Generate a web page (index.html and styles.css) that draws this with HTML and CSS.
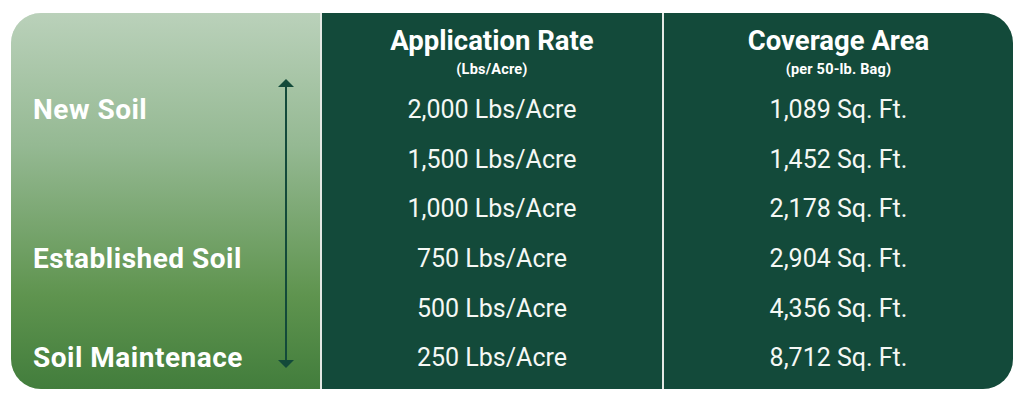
FILE: index.html
```html
<!DOCTYPE html>
<html lang="en">
<head>
<meta charset="utf-8">
<title>Application Rate Table</title>
<link rel="stylesheet" href="styles.css">
</head>
<body>
<div class="card">
  <div class="col col-stage">
    <div class="stage-head"></div>
    <div class="stage-label r1">New Soil</div>
    <div class="stage-label r4">Established Soil</div>
    <div class="stage-label r6">Soil Maintenace</div>
    <svg class="arrow" viewBox="0 0 16 289" width="16" height="289" aria-hidden="true">
      <line x1="8" y1="7" x2="8" y2="282" stroke="#134a3a" stroke-width="2"/>
      <polygon points="8,0 16,8 0,8" fill="#134a3a"/>
      <polygon points="8,289 16,281 0,281" fill="#134a3a"/>
    </svg>
  </div>
  <div class="col col-data">
    <div class="head">
      <div class="title">Application Rate</div>
      <div class="sub">(Lbs/Acre)</div>
    </div>
    <div class="cell">2,000 Lbs/Acre</div>
    <div class="cell">1,500 Lbs/Acre</div>
    <div class="cell">1,000 Lbs/Acre</div>
    <div class="cell">750 Lbs/Acre</div>
    <div class="cell">500 Lbs/Acre</div>
    <div class="cell">250 Lbs/Acre</div>
  </div>
  <div class="col col-data">
    <div class="head">
      <div class="title">Coverage Area</div>
      <div class="sub">(per 50-lb. Bag)</div>
    </div>
    <div class="cell">1,089 Sq. Ft.</div>
    <div class="cell">1,452 Sq. Ft.</div>
    <div class="cell">2,178 Sq. Ft.</div>
    <div class="cell">2,904 Sq. Ft.</div>
    <div class="cell">4,356 Sq. Ft.</div>
    <div class="cell">8,712 Sq. Ft.</div>
  </div>
</div>
</body>
</html>
```
FILE: styles.css
```css
html, body {
  margin: 0;
  padding: 0;
  background: #ffffff;
}
body {
  padding: 13px 11px 0 11px;
  font-family: Roboto, "Liberation Sans", sans-serif;
  color: #ffffff;
}
.card {
  width: 1002px;
  height: 376px;
  display: grid;
  grid-template-columns: 309px 340px 1fr;
  column-gap: 2px;
  background: #e4e9e4;
  border-radius: 30px;
  overflow: hidden;
}
.col {
  height: 100%;
}
.col-stage {
  background: linear-gradient(to bottom, #bad1ba 0%, #95b993 35%, #5f944f 75%, #427d3c 100%);
  display: grid;
  grid-template-columns: 1fr 16px;
  grid-template-rows: 72px repeat(6, 49.6px);
  padding: 0 26px 0 22px;
}
.stage-label {
  grid-column: 1;
  display: flex;
  align-items: center;
  font-weight: 700;
  font-size: 28px;
  letter-spacing: 0.5px;
  color: #ffffff;
}
.r1 { grid-row: 2; }
.r4 { grid-row: 5; }
.r6 { grid-row: 7; }
.arrow {
  grid-column: 2;
  grid-row: 1 / -1;
  align-self: start;
  margin-top: 66px;
}
.col-data {
  background: #134a3a;
  display: flex;
  flex-direction: column;
  align-items: stretch;
}
.head {
  height: 72px;
  padding-top: 12px;
  box-sizing: border-box;
  text-align: center;
}
.title {
  font-weight: 700;
  font-size: 27.5px;
  line-height: 32px;
}
.sub {
  font-weight: 700;
  font-size: 14.5px;
  letter-spacing: 0.2px;
  line-height: 16px;
  margin-top: 5px;
}
.cell {
  height: 49.6px;
  display: flex;
  align-items: center;
  justify-content: center;
  font-size: 25px;
  color: #f5f8f5;
}
```
